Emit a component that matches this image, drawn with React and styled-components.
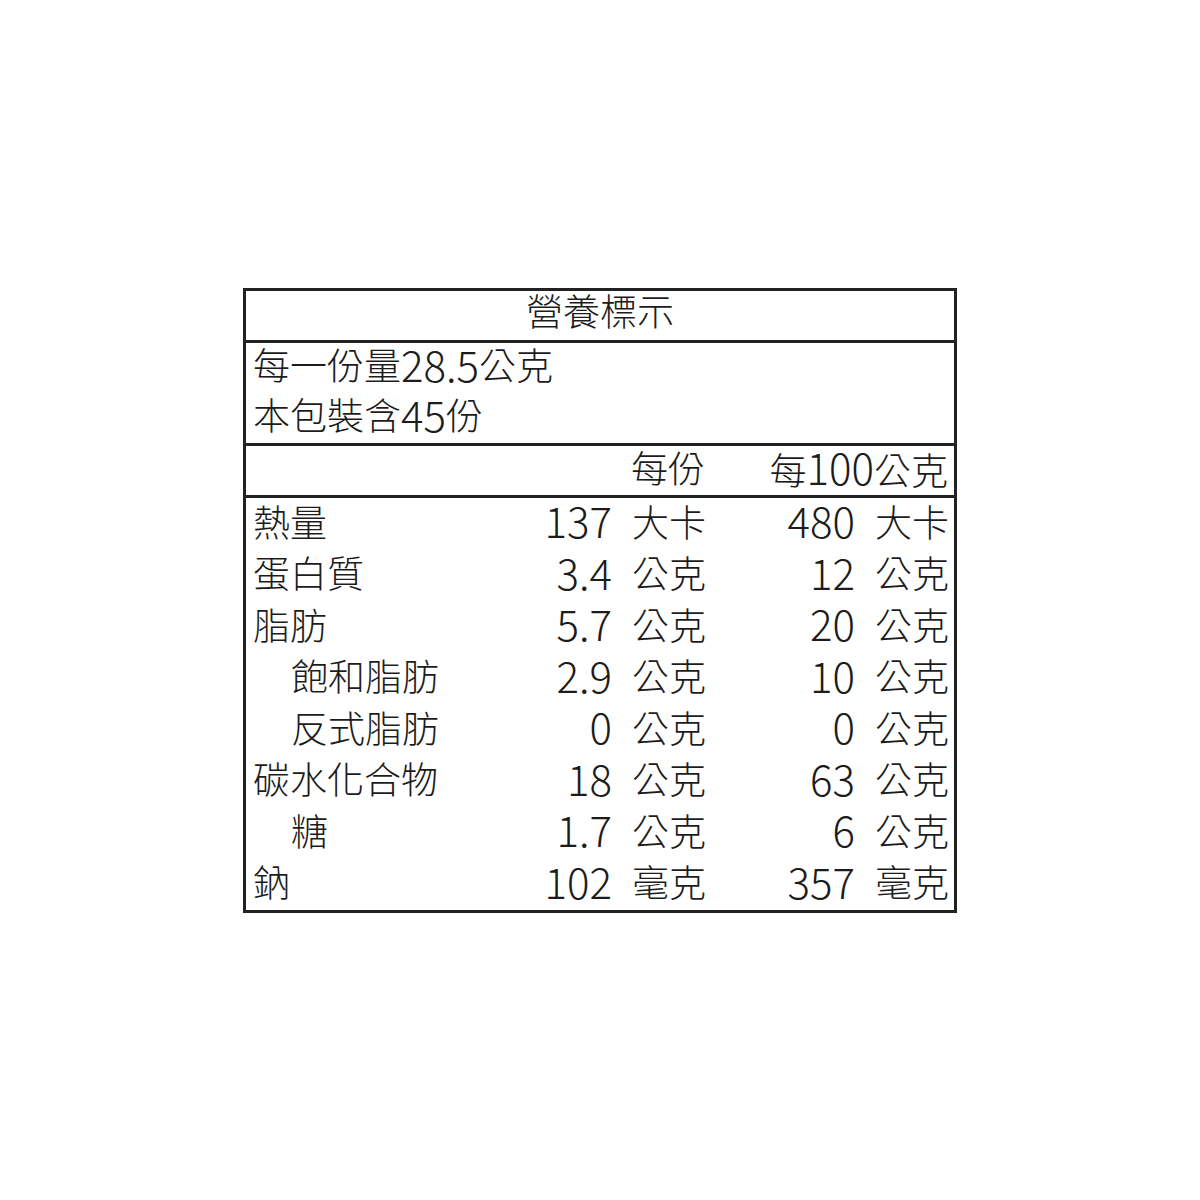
import React from 'react';
import styled, { createGlobalStyle } from 'styled-components';

const GlobalStyle = createGlobalStyle`
  html, body {
    margin: 0;
    padding: 0;
    background: #fff;
  }
  body {
    font-family: "Noto Sans CJK TC", "Noto Sans", sans-serif;
    color: #1c1c1c;
  }
`;

const Page = styled.div`
  width: 1200px;
  height: 1200px;
  padding-top: 288px;
  box-sizing: border-box;
`;

const Label = styled.div`
  width: 714px;
  margin: 0 auto;
  border: 3px solid #222;
  box-sizing: border-box;
  font-size: 37px;
  font-weight: 300;
  line-height: 1;
`;

const Title = styled.div`
  height: 52px;
  box-sizing: border-box;
  padding-bottom: 10px;
  display: flex;
  align-items: center;
  justify-content: center;
  border-bottom: 3px solid #222;
`;

const Serving = styled.div`
  border-bottom: 3px solid #222;
  padding: 0 6px 0 7px;
`;

const ServingLine = styled.div`
  height: 50px;
  box-sizing: border-box;
  padding-bottom: 8px;
  display: flex;
  align-items: center;
`;

const Row = styled.div`
  display: grid;
  grid-template-columns: 1fr 92px 93px 150px 93px;
  align-items: center;
  height: ${p => p.$h || 51.5}px;
  box-sizing: ${p => (p.$divider ? 'content-box' : 'border-box')};
  padding: 0 6px ${p => (p.$divider ? 8 : 5)}px 7px;
  border-bottom: ${p => (p.$divider ? '3px solid #222' : 'none')};
`;

const Name = styled.div`
  padding-left: ${p => (p.$sub ? 38 : 0)}px;
  white-space: nowrap;
`;

const Num = styled.div`
  text-align: right;
  white-space: nowrap;
  font-size: 42px;
  line-height: 1;
  margin-top: -2px;
`;

const Digits = styled.span`
  font-size: 42px;
  line-height: 1;
`;

const Unit = styled.div`
  padding-left: 20px;
  white-space: nowrap;
`;

const HeadCell = styled.div`
  grid-column: ${p => p.$span};
  text-align: right;
  white-space: nowrap;
`;

const rows = [
  { name: '熱量', a: '137', ua: '大卡', b: '480', ub: '大卡' },
  { name: '蛋白質', a: '3.4', ua: '公克', b: '12', ub: '公克' },
  { name: '脂肪', a: '5.7', ua: '公克', b: '20', ub: '公克' },
  { name: '飽和脂肪', sub: true, a: '2.9', ua: '公克', b: '10', ub: '公克' },
  { name: '反式脂肪', sub: true, a: '0', ua: '公克', b: '0', ub: '公克' },
  { name: '碳水化合物', a: '18', ua: '公克', b: '63', ub: '公克' },
  { name: '糖', sub: true, a: '1.7', ua: '公克', b: '6', ub: '公克' },
  { name: '鈉', a: '102', ua: '毫克', b: '357', ub: '毫克' },
];

const App = () => (
  <Page>
    <GlobalStyle />
    <Label>
      <Title>營養標示</Title>
      <Serving>
        <ServingLine>每一份量<Digits>28.5</Digits>公克</ServingLine>
        <ServingLine>本包裝含<Digits>45</Digits>份</ServingLine>
      </Serving>
      <Row $h={41} $divider>
        <HeadCell $span="2 / 4">每份</HeadCell>
        <HeadCell $span="4 / 6">每<Digits>100</Digits>公克</HeadCell>
      </Row>
      {rows.map(r => (
        <Row key={r.name}>
          <Name $sub={r.sub}>{r.name}</Name>
          <Num>{r.a}</Num>
          <Unit>{r.ua}</Unit>
          <Num>{r.b}</Num>
          <Unit>{r.ub}</Unit>
        </Row>
      ))}
    </Label>
  </Page>
);

export default App;
